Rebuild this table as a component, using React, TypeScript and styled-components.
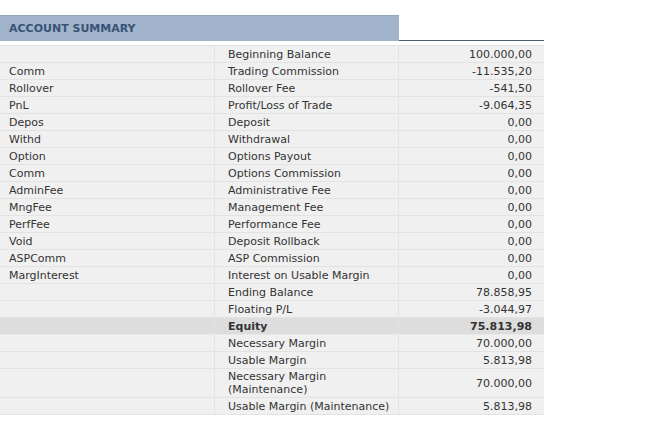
import React from "react";
import styled, { createGlobalStyle } from "styled-components";

const GlobalStyle = createGlobalStyle`
	body {
		margin: 0;
		background: #ffffff;
		font-family: "DejaVu Sans", Verdana, sans-serif;
	}
`;

type Line = {
	code: string;
	label: string;
	value: string;
	strong?: boolean;
};

const lines: Line[] = [
	{ code: "", label: "Beginning Balance", value: "100.000,00" },
	{ code: "Comm", label: "Trading Commission", value: "-11.535,20" },
	{ code: "Rollover", label: "Rollover Fee", value: "-541,50" },
	{ code: "PnL", label: "Profit/Loss of Trade", value: "-9.064,35" },
	{ code: "Depos", label: "Deposit", value: "0,00" },
	{ code: "Withd", label: "Withdrawal", value: "0,00" },
	{ code: "Option", label: "Options Payout", value: "0,00" },
	{ code: "Comm", label: "Options Commission", value: "0,00" },
	{ code: "AdminFee", label: "Administrative Fee", value: "0,00" },
	{ code: "MngFee", label: "Management Fee", value: "0,00" },
	{ code: "PerfFee", label: "Performance Fee", value: "0,00" },
	{ code: "Void", label: "Deposit Rollback", value: "0,00" },
	{ code: "ASPComm", label: "ASP Commission", value: "0,00" },
	{ code: "MargInterest", label: "Interest on Usable Margin", value: "0,00" },
	{ code: "", label: "Ending Balance", value: "78.858,95" },
	{ code: "", label: "Floating P/L", value: "-3.044,97" },
	{ code: "", label: "Equity", value: "75.813,98", strong: true },
	{ code: "", label: "Necessary Margin", value: "70.000,00" },
	{ code: "", label: "Usable Margin", value: "5.813,98" },
	{ code: "", label: "Necessary Margin (Maintenance)", value: "70.000,00" },
	{ code: "", label: "Usable Margin (Maintenance)", value: "5.813,98" },
];

export default function App() {
	return (
		<>
			<GlobalStyle />
			<Summary>
				<TabBar>
					<Tab>ACCOUNT SUMMARY</Tab>
					<TabFiller />
				</TabBar>
				<Rows>
					{lines.map((line, i) => (
						<Row key={i} strong={!!line.strong}>
							<CodeCell>{line.code}</CodeCell>
							<LabelCell>{line.label}</LabelCell>
							<ValueCell>{line.value}</ValueCell>
						</Row>
					))}
				</Rows>
			</Summary>
		</>
	);
}

const Summary = styled.div`
	width: 544px;
	padding-top: 15px;
`;

const TabBar = styled.div`
	display: flex;
	align-items: stretch;
	height: 26px;
`;

const Tab = styled.div`
	width: 390px;
	padding-left: 9px;
	background: #a1b4cc;
	border-top: 1px solid #93a7c0;
	color: #3a5375;
	font-size: 11px;
	font-weight: bold;
	line-height: 25px;
`;

const TabFiller = styled.div`
	flex: 1;
	border-bottom: 1px solid #4d5d74;
`;

const Rows = styled.div`
	margin-top: 4px;
	border-top: 1px solid #e3e3e3;
`;

const Row = styled.div<{ strong: boolean }>`
	display: grid;
	grid-template-columns: 215px 184px 145px;
	min-height: 16px;
	background: ${(props) => (props.strong ? "#dddddd" : "#f0f0f0")};
	border-bottom: 1px solid ${(props) => (props.strong ? "#e8e8e8" : "#e3e3e3")};
	color: #333333;
	font-size: 11px;
	font-weight: ${(props) => (props.strong ? "bold" : "normal")};
	line-height: 13px;
`;

const Cell = styled.div`
	display: flex;
	align-items: center;
	padding: 1px 0;
`;

const CodeCell = styled(Cell)`
	padding-left: 9px;
	border-right: 1px solid #e3e3e3;
`;

const LabelCell = styled(Cell)`
	padding-left: 13px;
	padding-right: 6px;
	border-right: 1px solid #e3e3e3;
`;

const ValueCell = styled(Cell)`
	justify-content: flex-end;
	padding-right: 12px;
`;
